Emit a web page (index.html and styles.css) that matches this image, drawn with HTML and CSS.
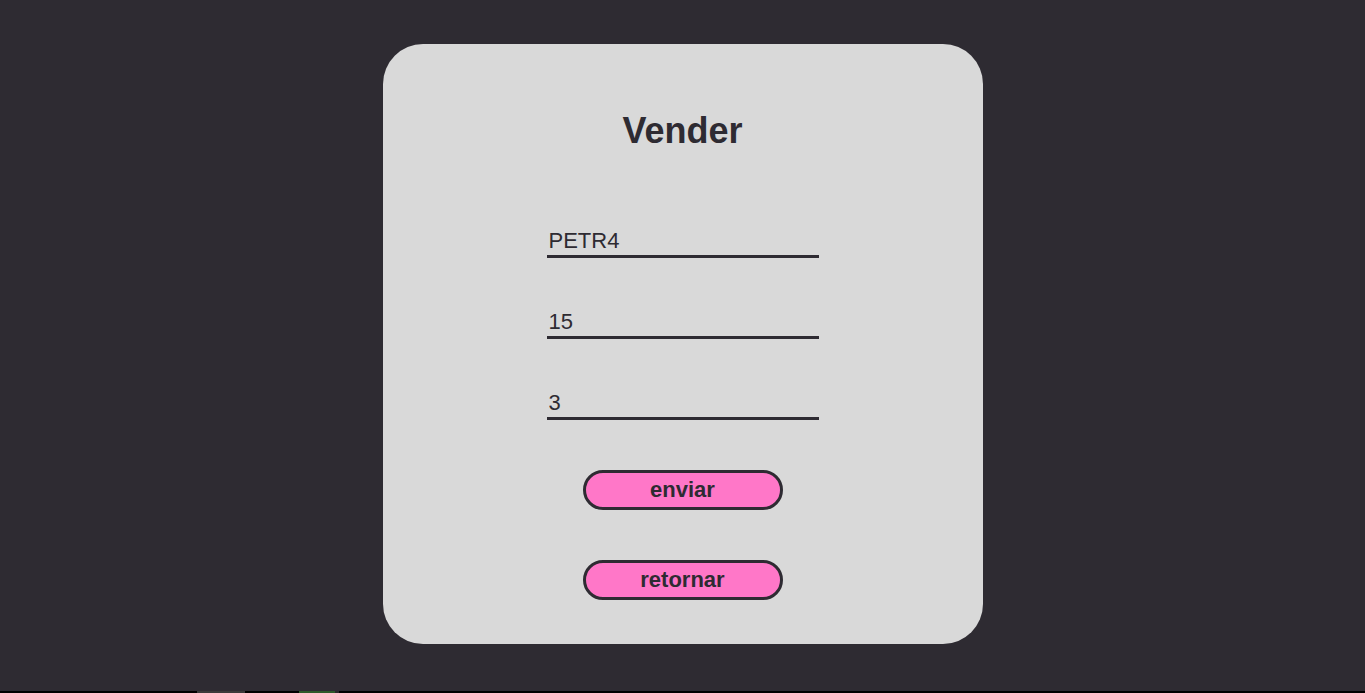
FILE: index.html
```html
<!DOCTYPE html>
<html lang="pt">
<head>
<meta charset="utf-8">
<title>Vender</title>
<link rel="stylesheet" href="styles.css">
</head>
<body>
<main class="page">
  <form class="card">
    <h1 class="title">Vender</h1>
    <input class="field" type="text" value="PETR4">
    <input class="field" type="text" value="15">
    <input class="field" type="text" value="3">
    <button class="btn btn-send" type="button">enviar</button>
    <button class="btn btn-back" type="button">retornar</button>
  </form>
</main>
<footer class="taskbar">
  <span class="task task-gray"></span>
  <span class="task task-green"></span>
  <span class="task task-dark"></span>
</footer>
</body>
</html>
```
FILE: styles.css
```css
* { box-sizing: border-box; }
html, body {
  margin: 0;
  padding: 0;
  height: 693px;
  overflow: hidden;
  background: #2e2b32;
  font-family: "Liberation Sans", Arial, sans-serif;
}
.page {
  height: 691px;
  display: flex;
  justify-content: center;
  padding-top: 44px;
}
.card {
  width: 600px;
  height: 600px;
  background: #d9d9d9;
  border-radius: 40px;
  display: flex;
  flex-direction: column;
  align-items: center;
  padding-top: 67px;
}
.title {
  margin: 0 0 77px;
  font-size: 36px;
  line-height: 40px;
  font-weight: bold;
  color: #2e2b32;
}
.field {
  width: 272px;
  height: 30px;
  margin: 0 0 51px;
  padding: 0 2px 2px;
  border: none;
  border-bottom: 3px solid #2e2b32;
  background: transparent;
  font-family: "Liberation Sans", Arial, sans-serif;
  font-size: 22px;
  color: #2e2b32;
  outline: none;
}
.field:last-of-type { margin-bottom: 50px; }
.btn {
  width: 200px;
  height: 40px;
  border: 3px solid #2e2b32;
  border-radius: 20px;
  background: #ff77c8;
  color: #2e2b32;
  font-family: "Liberation Sans", Arial, sans-serif;
  font-size: 22px;
  font-weight: bold;
  padding: 0;
  line-height: 1;
}
.btn-send { margin-bottom: 50px; }
.taskbar {
  height: 2px;
  background: #000;
  display: flex;
}
.task { height: 2px; display: block; }
.task-gray { width: 48px; margin-left: 197px; background: #3a3a3a; }
.task-green { width: 36px; margin-left: 54px; background: #2e5a2a; }
.task-dark { width: 4px; background: #2a2a2a; }
```
